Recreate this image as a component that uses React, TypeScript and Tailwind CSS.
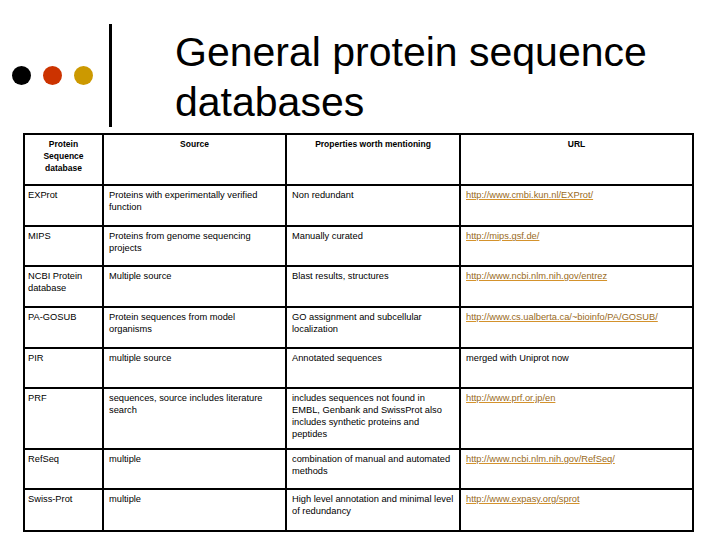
type Row = {
  name: string;
  source: string;
  props: string;
  url: string;
  link: boolean;
  h: string;
};

const ROWS: Row[] = [
  { name: "EXProt", source: "Proteins with experimentally verified function", props: "Non redundant", url: "http://www.cmbi.kun.nl/EXProt/", link: true, h: "h-[41px]" },
  { name: "MIPS", source: "Proteins from genome sequencing projects", props: "Manually curated", url: "http://mips.gsf.de/", link: true, h: "h-[40px]" },
  { name: "NCBI Protein database", source: "Multiple source", props: "Blast results, structures", url: "http://www.ncbi.nlm.nih.gov/entrez", link: true, h: "h-[41px]" },
  { name: "PA-GOSUB", source: "Protein sequences from model organisms", props: "GO assignment and subcellular localization", url: "http://www.cs.ualberta.ca/~bioinfo/PA/GOSUB/", link: true, h: "h-[41px]" },
  { name: "PIR", source: "multiple source", props: "Annotated sequences", url: "merged with Uniprot now", link: false, h: "h-[40px]" },
  { name: "PRF", source: "sequences, source includes literature search", props: "includes sequences not found in EMBL, Genbank and SwissProt also includes synthetic proteins and peptides", url: "http://www.prf.or.jp/en", link: true, h: "h-[61px]" },
  { name: "RefSeq", source: "multiple", props: "combination of manual and automated methods", url: "http://www.ncbi.nlm.nih.gov/RefSeq/", link: true, h: "h-[40px]" },
  { name: "Swiss-Prot", source: "multiple", props: "High level annotation and minimal level of redundancy", url: "http://www.expasy.org/sprot", link: true, h: "h-[42px]" },
];

const th = "border-2 border-black px-[4px] pt-[3px] align-top text-center font-bold text-[8.5px] leading-[12px]";
const td = "border-2 border-black px-[5px] pt-[3px] align-top text-[9.3px] leading-[12px]";

export default function App() {
  return (
    <div className="w-[720px] h-[540px] bg-white text-black font-['Liberation_Sans',Arial,sans-serif] overflow-hidden">
      {/* slide title with the three dots and the rule */}
      <div className="flex items-start pt-[24px]">
        <div className="flex items-center h-[103px] pl-[12px]">
          <span className="block w-[19px] h-[19px] rounded-full bg-black" />
          <span className="block w-[19px] h-[19px] rounded-full bg-[#cc3300] ml-[12px]" />
          <span className="block w-[19px] h-[19px] rounded-full bg-[#cc9900] ml-[12px]" />
          <span className="block w-[3px] h-[103px] bg-black ml-[16px]" />
        </div>
        <h1 className="ml-[63px] mt-[3px] text-[41px] leading-[50px] font-normal">
          General protein sequence
          <br />
          databases
        </h1>
      </div>

      <table className="ml-[23px] mt-[6px] w-[671px] table-fixed border-collapse border-2 border-black">
        <colgroup>
          <col className="w-[79px]" />
          <col className="w-[183px]" />
          <col className="w-[174px]" />
          <col className="w-[233px]" />
        </colgroup>
        <thead>
          <tr className="h-[51px]">
            <th className={th}>
              Protein
              <br />
              Sequence
              <br />
              database
            </th>
            <th className={th}>Source</th>
            <th className={th}>Properties worth mentioning</th>
            <th className={th}>URL</th>
          </tr>
        </thead>
        <tbody>
          {ROWS.map((r) => (
            <tr key={r.name} className={r.h}>
              <td className={`${td} pl-[3px]`}>{r.name}</td>
              <td className={td}>{r.source}</td>
              <td className={td}>{r.props}</td>
              <td className={td}>
                {r.link ? (
                  <span className="text-[#996a22] underline decoration-[#d4922c]">{r.url}</span>
                ) : (
                  r.url
                )}
              </td>
            </tr>
          ))}
        </tbody>
      </table>
    </div>
  );
}
